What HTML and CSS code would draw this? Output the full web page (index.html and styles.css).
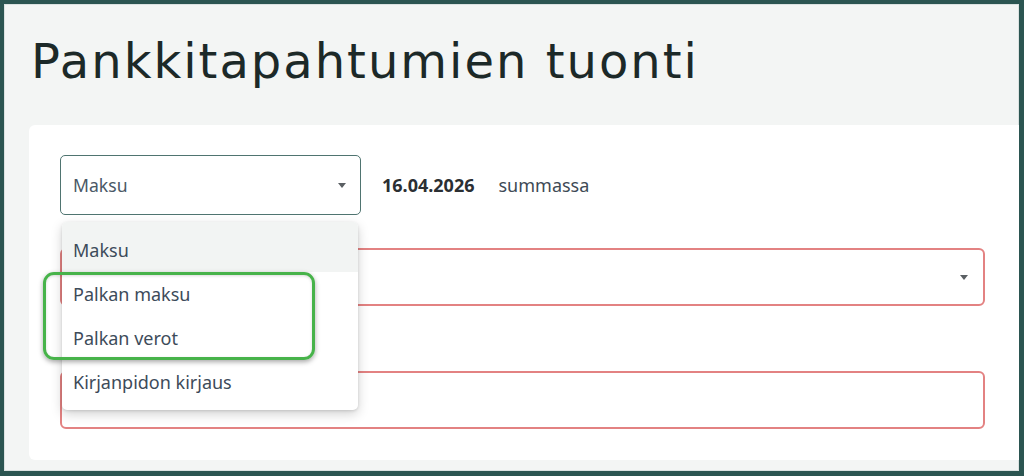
FILE: index.html
```html
<!DOCTYPE html>
<html lang="fi">
<head>
<meta charset="utf-8">
<title>Pankkitapahtumien tuonti</title>
<link rel="stylesheet" href="styles.css">
</head>
<body>
<div class="frame">
  <h1 class="title">Pankkitapahtumien tuonti</h1>
  <div class="card">
    <div class="row">
      <div class="select">
        <span class="select-value">Maksu</span>
        <span class="caret"></span>
      </div>
      <span class="date">16.04.2026</span>
      <span class="label">summassa</span>
    </div>
    <div class="field field-select invalid">
      <span class="caret"></span>
    </div>
    <div class="field invalid second"></div>

    <ul class="menu">
      <li class="item active">Maksu</li>
      <li class="item">Palkan maksu</li>
      <li class="item">Palkan verot</li>
      <li class="item">Kirjanpidon kirjaus</li>
    </ul>
    <div class="highlight"></div>
  </div>
</div>
</body>
</html>
```

FILE: styles.css
```css
html, body {
  margin: 0;
  padding: 0;
}

body {
  width: 1024px;
  height: 476px;
  overflow: hidden;
  font-family: "Noto Sans", "Open Sans", sans-serif;
}

.frame {
  width: 1024px;
  height: 476px;
  box-sizing: border-box;
  border: 4px solid #2b5551;
  border-right-width: 5px;
  border-bottom-width: 5px;
  background: #f3f5f4;
  box-shadow: inset 0 0 0 1px #dbe2e1;
  padding-left: 25px;
  overflow: hidden;
}

.title {
  margin: 0;
  padding-top: 27px;
  padding-left: 2px;
  font-family: "DejaVu Sans", "Noto Sans", sans-serif;
  font-weight: 400;
  font-size: 48px;
  line-height: 60px;
  letter-spacing: 2px;
  color: #1c2928;
  height: 121px;
  box-sizing: border-box;
}

.card {
  position: relative;
  background: #ffffff;
  border-radius: 6px 0 0 6px;
  padding: 30px 34px 31px 31px;
  height: 335px;
  box-sizing: border-box;
}

.row {
  display: flex;
  align-items: center;
  height: 60px;
}

.select {
  width: 301px;
  height: 60px;
  box-sizing: border-box;
  border: 1.6px solid #4f7470;
  border-radius: 5px;
  display: flex;
  align-items: center;
  justify-content: space-between;
  padding: 0 14px 0 12px;
}

.select-value {
  font-size: 17.6px;
  color: #4a5866;
}

.caret {
  width: 0;
  height: 0;
  border-left: 4.5px solid transparent;
  border-right: 4.5px solid transparent;
  border-top: 5px solid #5a5f63;
}

.date {
  margin-left: 21px;
  font-size: 18px;
  font-weight: 700;
  color: #2b2f33;
}

.label {
  margin-left: 24px;
  font-size: 18px;
  color: #3e4a55;
}

.field {
  height: 58px;
  box-sizing: border-box;
  border: 2px solid #e38282;
  border-radius: 6px;
  margin-top: 33px;
}

.field-select {
  display: flex;
  align-items: center;
  justify-content: flex-end;
  padding-right: 15px;
}

.field.second {
  margin-top: 65px;
}

.menu {
  position: absolute;
  left: 33px;
  top: 97px;
  width: 296px;
  margin: 0;
  padding: 0 0 6px;
  list-style: none;
  background: #ffffff;
  border-radius: 5px;
  box-shadow: 0 4px 12px rgba(0, 0, 0, 0.18), 0 1px 3px rgba(0, 0, 0, 0.12);
  overflow: hidden;
}

.item {
  height: 44px;
  display: flex;
  align-items: center;
  padding-left: 11px;
  font-size: 18px;
  color: #3d4b5a;
}

.item.active {
  height: 50px;
  padding-top: 6px;
  box-sizing: border-box;
  background: #f2f4f3;
}

.highlight {
  position: absolute;
  left: 14px;
  top: 147px;
  width: 272px;
  height: 88px;
  box-sizing: border-box;
  border: 3px solid #47b34a;
  border-radius: 11px;
  box-shadow: 0 2px 5px rgba(0, 0, 0, 0.35), inset 0 1px 3px rgba(0, 0, 0, 0.15);
}
```
